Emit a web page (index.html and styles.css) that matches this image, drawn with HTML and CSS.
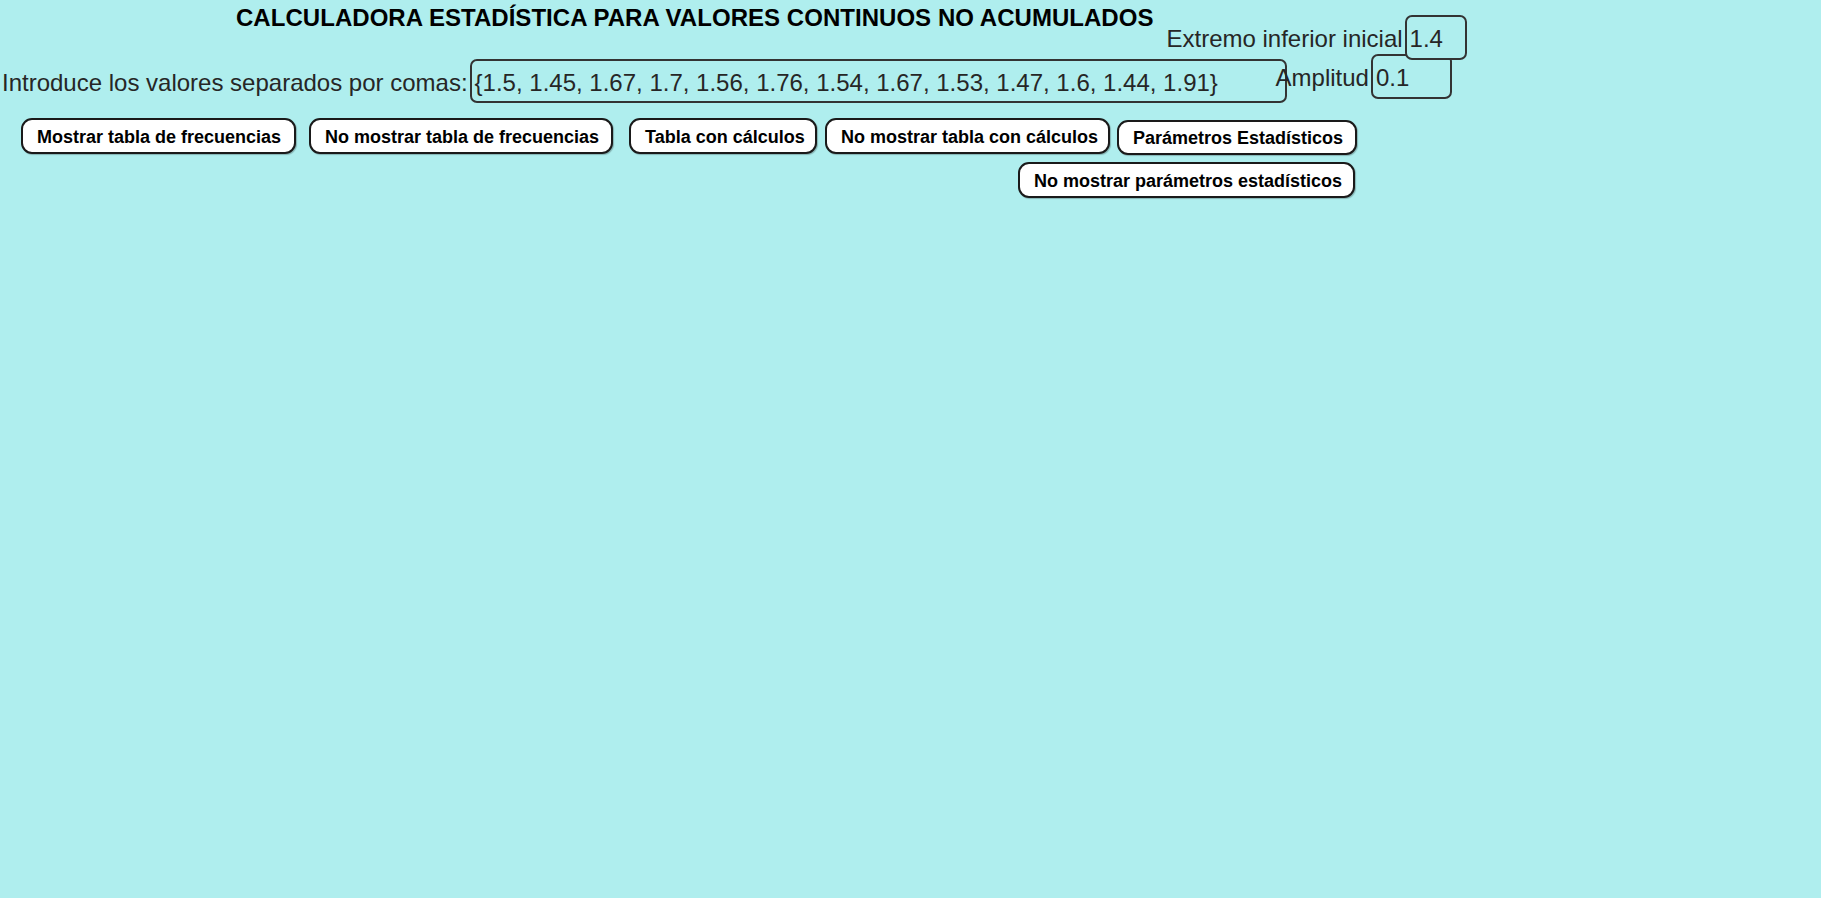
FILE: index.html
```html
<!DOCTYPE html>
<html lang="es">
<head>
<meta charset="utf-8">
<title>Calculadora estadística</title>
<link rel="stylesheet" href="styles.css">
</head>
<body>
<div class="app">
  <div class="row row-head">
    <h1 class="title">CALCULADORA ESTADÍSTICA PARA VALORES CONTINUOS NO ACUMULADOS</h1>
    <div class="field field-ext">
      <span class="label">Extremo inferior inicial</span>
      <div class="box box-ext">1.4</div>
    </div>
  </div>
  <div class="row row-data">
    <div class="field field-vals">
      <span class="label">Introduce los valores separados por comas:</span>
      <div class="box box-vals">{1.5, 1.45, 1.67, 1.7, 1.56, 1.76, 1.54, 1.67, 1.53, 1.47, 1.6, 1.44, 1.91}</div>
    </div>
    <div class="field field-amp">
      <span class="label">Amplitud</span>
      <div class="box box-amp">0.1</div>
    </div>
  </div>
  <div class="row row-buttons">
    <button class="btn btn-1">Mostrar tabla de frecuencias</button>
    <button class="btn btn-2">No mostrar tabla de frecuencias</button>
    <button class="btn btn-3">Tabla con cálculos</button>
    <button class="btn btn-4">No mostrar tabla con cálculos</button>
    <button class="btn btn-5">Parámetros Estadísticos</button>
  </div>
  <div class="row row-buttons2">
    <button class="btn btn-6">No mostrar parámetros estadísticos</button>
  </div>
</div>
</body>
</html>
```
FILE: styles.css
```css
html, body {
  margin: 0;
  padding: 0;
  background: #afeeee;
  height: 100%;
}
body {
  font-family: "Liberation Sans", Arial, sans-serif;
  color: #262626;
}
.app {
  display: flex;
  flex-direction: column;
}
.row {
  display: flex;
  align-items: flex-start;
}
.row-head {
  height: 60px;
}
.title {
  margin: 4px 0 0 236px;
  font-size: 24px;
  line-height: 28px;
  font-weight: bold;
  color: #000;
  letter-spacing: 0.04px;
  white-space: nowrap;
}
.field {
  display: flex;
  align-items: center;
}
.label {
  font-size: 24px;
  line-height: 28px;
  padding-top: 3px;
  white-space: nowrap;
  color: #262626;
  margin-right: 2px;
}
.box {
  box-sizing: border-box;
  border: 2px solid #333;
  border-radius: 7px;
  background: #afeeee;
  font-size: 24px;
  line-height: 28px;
  padding: 3px 0 0 3px;
  display: flex;
  align-items: center;
  white-space: nowrap;
  color: #262626;
}
.field-ext {
  margin: 15px 0 0 13px;
}
.box-ext {
  width: 62px;
  height: 45px;
  position: relative;
  z-index: 1;
}
.row-data {
  margin-top: -6px;
  height: 49px;
}
.field-vals {
  margin: 5px 0 0 2px;
}
.box-vals {
  width: 817px;
  height: 44px;
  padding-left: 3px;
}
.field-amp {
  margin-left: -11px;
}
.box-amp {
  width: 81px;
  height: 45px;
}
.row-buttons {
  margin-top: 15px;
}
.btn {
  box-sizing: border-box;
  height: 36px;
  padding: 2px 14px 0;
  border: 2px solid #1a1a1a;
  border-radius: 11px;
  background: #fff;
  color: #000;
  font-family: "Liberation Sans", Arial, sans-serif;
  font-weight: bold;
  font-size: 18px;
  white-space: nowrap;
  box-shadow: 1px 1px 1px rgba(0,0,0,0.25);
  cursor: pointer;
}
.btn-1 { margin-left: 21px; width: 275px; }
.btn-2 { margin-left: 13px; width: 304px; }
.btn-3 { margin-left: 16px; width: 188px; }
.btn-4 { margin-left: 8px; width: 285px; }
.btn-5 { margin-left: 7px; width: 240px; margin-top: 2px; height: 35px; }
.row-buttons2 {
  margin-top: 7px;
}
.btn-6 { margin-left: 1018px; width: 337px; }
```
